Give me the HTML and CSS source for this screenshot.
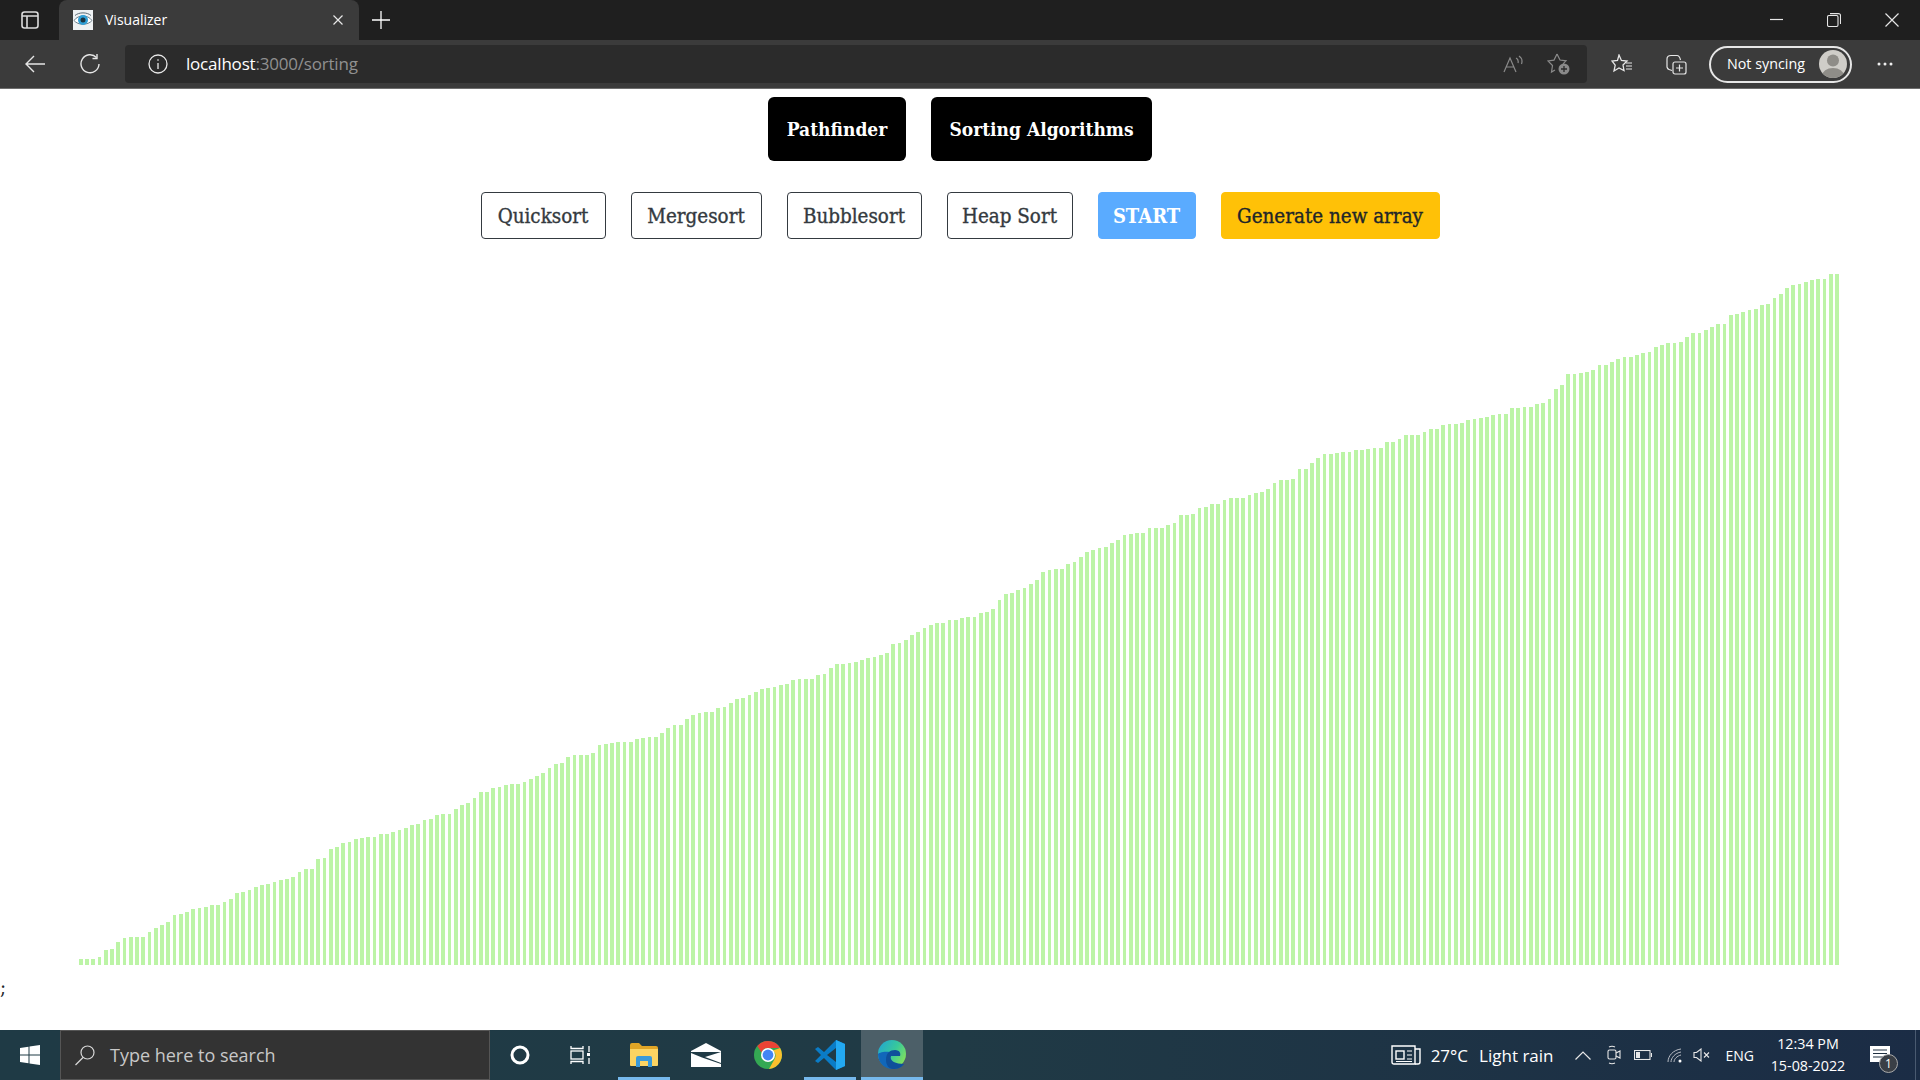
FILE: index.html
```html
<!DOCTYPE html>
<html lang="en">
<head>
  <meta charset="UTF-8" />
  <title>Visualizer</title>
  <link rel="stylesheet" href="styles.css">
</head>
<body>

  <!-- Browser tabs -->
  <div class="tabbar">
    <svg class="ico sidebar-ico" width="18" height="18" viewBox="0 0 18 18" fill="none" stroke="#dcdcdc" stroke-width="1.600"><rect x="1" y="1" width="16" height="16" rx="2.500"/><path d="M1 5h16M6 5v12"/></svg>
    <div class="tab">
      <svg class="favicon" width="20" height="20" viewBox="0 0 20 20"><rect width="20" height="20" fill="#eef1f3"/><path d="M1 10.500C5 4.500 15 4.500 19 10.500C15 15.500 5 15.500 1 10.500Z" fill="#fff" stroke="#6b7f8a" stroke-width="1"/><circle cx="10" cy="10" r="5" fill="#2f9fd6"/><circle cx="10" cy="10" r="2.500" fill="#1c3440"/><path d="M2 5.500C6 2 14 2 18 5.500" fill="none" stroke="#5b6b75"/></svg>
      <span class="tab-title">Visualizer</span>
      <svg class="tab-close" width="10" height="10" viewBox="0 0 10 10" stroke="#e8e8e8" stroke-width="1.200"><path d="M0.500 0.500l9 9M9.500 0.500l-9 9"/></svg>
    </div>
    <svg class="new-tab" width="18" height="18" viewBox="0 0 18 18" stroke="#fff" stroke-width="1.300"><path d="M9 0v18M0 9h18"/></svg>
    <div class="window-btns">
      <svg width="13" height="14" viewBox="0 0 13 14" stroke="#e6e6e6" stroke-width="1.200"><path d="M0 6.500h13"/></svg>
      <svg width="14" height="14" viewBox="0 0 14 14" fill="none" stroke="#e6e6e6" stroke-width="1.100"><rect x="0.500" y="2.500" width="10.500" height="11" rx="1.500"/><path d="M3 0.600h8.500a2 2 0 0 1 2 2V11"/></svg>
      <svg width="14" height="14" viewBox="0 0 14 14" stroke="#e6e6e6" stroke-width="1.200"><path d="M0.500 0.500l13 13M13.500 0.500l-13 13"/></svg>
    </div>
  </div>

  <!-- Address bar -->
  <div class="toolbar">
    <svg class="back-ico" width="20" height="18" viewBox="0 0 20 18" fill="none" stroke="#e6e6e6" stroke-width="1.400"><path d="M20 9H1M9 1L1 9l8 8"/></svg>
    <svg class="reload-ico" width="20" height="20" viewBox="0 0 20 20" fill="none" stroke="#e6e6e6" stroke-width="1.400"><path d="M16.500 3.500A9 9 0 1 0 19 10"/><path d="M17 0v4.500h-4.500"/></svg>
    <div class="address">
      <svg class="info-ico" width="20" height="20" viewBox="0 0 20 20" fill="none" stroke="#e8e8e8" stroke-width="1.300"><circle cx="10" cy="10" r="9"/><path d="M10 9v6M10 5.200v1.600"/></svg>
      <span class="url">localhost<span class="url-rest">:3000/sorting</span></span>
      <svg class="read-ico" width="20" height="18" viewBox="0 0 20 18" fill="none" stroke="#8a8a8a" stroke-width="1.200"><path d="M1 17L7 3l6 14M3 12h8M13 3c2 1 2.500 3 2 5M16 1c3 2 3.500 5 2.500 8"/></svg>
      <svg class="fav-add-ico" width="24" height="22" viewBox="0 0 24 22" fill="none" stroke="#8a8a8a" stroke-width="1.200"><path d="M10 1l3 6 6 .8-3 3M8 17l-3.500 2 1-6.500L1 8l6-.9L10 1"/><circle cx="17" cy="16" r="5.500" fill="#8a8a8a" stroke="none"/><path d="M17 13v6M14 16h6" stroke="#2b2b2b" stroke-width="1.300"/></svg>
    </div>
    <svg class="fav-ico" width="22" height="20" viewBox="0 0 22 20" fill="none" stroke="#e6e6e6" stroke-width="1.300"><path d="M8 1l2.400 5.500 5.600.5-4 4 1 5.500L8 14l-5 3 1.200-5.800L1 7l5.500-.5L8 1Z"/><path d="M15 9h6M15 12h6M15 15h6" stroke-width="1.100"/></svg>
    <svg class="coll-ico" width="21" height="21" viewBox="0 0 21 21" fill="none" stroke="#e6e6e6" stroke-width="1.200"><path d="M6 16.500L3 15.500Q1.500 15 1 13L1 5Q1 1.500 5 1.500L11 1.500Q13.500 1.500 14.500 6"/><rect x="7" y="8" width="13" height="12" rx="2"/><path d="M13.500 10.500v7M10 14h7"/></svg>
    <div class="sync-pill">
      <span>Not syncing</span>
      <svg class="avatar" width="28" height="28" viewBox="0 0 28 28"><defs><clipPath id="av"><circle cx="14" cy="14" r="14"/></clipPath></defs><circle cx="14" cy="14" r="14" fill="#cfcdc8"/><g clip-path="url(#av)" fill="#8f8d88"><circle cx="14" cy="10.500" r="6"/><ellipse cx="14" cy="26" rx="11" ry="8"/></g></svg>
    </div>
    <svg class="more-ico" width="16" height="4" viewBox="0 0 16 4" fill="#eee"><circle cx="2" cy="2" r="1.500"/><circle cx="8" cy="2" r="1.500"/><circle cx="14" cy="2" r="1.500"/></svg>
  </div>

  <!-- Page -->
  <div class="page">
    <div class="nav-row">
      <button class="nav-btn pathfinder">Pathfinder</button>
      <button class="nav-btn sorting">Sorting Algorithms</button>
    </div>
    <div class="algo-row">
      <button class="algo-btn quick">Quicksort</button>
      <button class="algo-btn merge">Mergesort</button>
      <button class="algo-btn bubble">Bubblesort</button>
      <button class="algo-btn heap">Heap Sort</button>
      <button class="algo-btn start">START</button>
      <button class="algo-btn generate">Generate new array</button>
    </div>
    <div class="chart" id="chart"></div>
    <div class="stray">;</div>
  </div>

  <!-- Windows taskbar -->
  <div class="taskbar">
    <div class="start-btn">
      <svg width="20" height="20" viewBox="0 0 20 20" fill="#fff"><path d="M0 3l8.500-1.200V9.500H0ZM9.500 1.600L20 0v9.500H9.500ZM0 10.500h8.500v7.700L0 17ZM9.500 10.500H20V20L9.500 18.400Z"/></svg>
    </div>
    <div class="search-box">
      <svg width="20" height="21" viewBox="0 0 20 21" fill="none" stroke="#d8d8d8" stroke-width="1.200"><circle cx="12.500" cy="7.500" r="6.500"/><path d="M8 12.500L0.500 20"/></svg>
      <span>Type here to search</span>
    </div>
    <div class="task-icons">
      <div class="task-item"><svg width="20" height="20" viewBox="0 0 20 20" fill="none" stroke="#fff" stroke-width="3"><circle cx="10" cy="10" r="8"/></svg></div>
      <div class="task-item task-view"><svg width="20" height="20" viewBox="0 0 20 20" fill="none" stroke="#fff" stroke-width="1.300"><path d="M1 1v2.500h12V1M1 19v-2.500h12V19"/><rect x="1" y="6" width="12" height="8"/><path d="M19 1v6M19 13v6"/><rect x="17" y="8" width="3" height="3" fill="#fff" stroke="none"/></svg></div>
      <div class="task-item running"><svg width="28" height="24" viewBox="0 0 28 24"><path d="M0 2q0-2 2-2h7l3 3h14q2 0 2 2v3H0Z" fill="#e0a526"/><path d="M0 6h28v16q0 1-1 1H1q-1 0-1-1Z" fill="#fcd462"/><path d="M6 24v-9q0-2 2-2h12q2 0 2 2v9h-4v-6h-8v6Z" fill="#3a9ad9"/></svg></div>
      <div class="task-item"><svg width="30" height="24" viewBox="0 0 30 24"><path d="M0 8L15 0l15 8v16H0Z" fill="#fff"/><path d="M0 9H30L14 14 30 20V21L11 14.500 0 10Z" fill="#203a45"/></svg></div>
      <div class="task-item"><svg width="28" height="28" viewBox="0 0 28 28"><circle cx="14" cy="14" r="14" fill="#34a853"/><path d="M14 0a14 14 0 0 1 12.100 7H14a7 7 0 0 0-6.500 4.400L3.300 5A14 14 0 0 1 14 0Z" fill="#ea4335"/><path d="M26.100 7A14 14 0 0 1 15 28l5.600-10A7 7 0 0 0 19 9.500Z" fill="#fbc02d"/><circle cx="14" cy="14" r="7" fill="#fff"/><circle cx="14" cy="14" r="5.400" fill="#4285f4"/></svg></div>
      <div class="task-item running"><svg width="30" height="30" viewBox="0 0 30 30"><path d="M21 0l9 4v22l-9 4L9 18l-6 5-3-2 6-6-6-6 3-2 6 5Z" fill="#0a7cc7"/><path d="M21 0l9 4v22l-9 4Z" fill="#23a9f2"/><path d="M21 8v14l-9-7Z" fill="#203a45"/></svg></div>
      <div class="task-item active"><svg width="30" height="30" viewBox="0 0 30 30"><defs><linearGradient id="edgeA" x1="0" y1="0" x2="1" y2="0.600"><stop offset="0" stop-color="#1fa3d8"/><stop offset="0.600" stop-color="#38c99a"/><stop offset="1" stop-color="#7ee060"/></linearGradient></defs><circle cx="15" cy="14" r="14" fill="url(#edgeA)"/><path d="M1 14c0 9 7 15 15 15 5 0 9-2 11-5-6 3-14 1-14-6 0-3 1.500-4 3-5-7-3-15 0-15 1Z" fill="#1167ba"/><path d="M9 20c0-7 4-10 9-10s6 4 5 6l-9 0c-2 5 5 8 13 8-3 4-7 5-11 5-4 0-7-4-7-9Z" fill="#0f4f9b"/></svg></div>
    </div>
    <div class="tray">
      <svg class="news-ico" width="30" height="20" viewBox="0 0 30 20" fill="none" stroke="#fff" stroke-width="1.400"><path d="M1 1h23v18H3q-2 0-2-2Z"/><path d="M24 4h5v13q0 2-2 2h-3"/><rect x="5" y="6" width="8" height="8"/><path d="M16 6h5M16 10h5M16 14h5M5 16.500h16" stroke-width="1.200"/></svg>
      <span class="tray-temp">27°C</span>
      <span class="tray-rain">Light rain</span>
      <svg class="caret" width="16" height="9" viewBox="0 0 16 9" fill="none" stroke="#e8e8e8" stroke-width="1.200"><path d="M0.500 8.500L8 1l7.500 7.500"/></svg>
      <svg class="meet" width="14" height="20" viewBox="0 0 14 20" fill="none" stroke="#e8e8e8" stroke-width="1.100"><rect x="1" y="5" width="8" height="9" rx="1.500"/><path d="M9 8l4-2v7l-4-2M2 2q3-1.500 6 0M2 18q3 1.500 6 0"/></svg>
      <svg class="battery" width="18" height="10" viewBox="0 0 18 10" fill="none" stroke="#e8e8e8" stroke-width="1.100"><rect x="0.500" y="0.500" width="15.500" height="9"/><rect x="2" y="2" width="4" height="6" fill="#e8e8e8" stroke="none"/><path d="M17.500 3v4"/></svg>
      <svg class="wifi" width="15" height="15" viewBox="0 0 15 15" fill="none" stroke="#b8bcc4" stroke-width="1"><path d="M1 14C1 8 6 2 14 1M4 14C4 10 8 5 14 4M7 14C7 11 10 8 14 7"/><circle cx="13" cy="13" r="1.500" fill="#fff" stroke="none"/></svg>
      <svg class="volume" width="18" height="14" viewBox="0 0 18 14" fill="none" stroke="#e8e8e8" stroke-width="1.100"><path d="M1 4.500h2.500L8 1v12L3.500 9.500H1Z"/><path d="M11 4.500l5 5M16 4.500l-5 5"/></svg>
      <span class="tray-lang">ENG</span>
      <div class="clock"><span>12:34 PM</span><span>15-08-2022</span></div>
      <div class="notif">
        <svg width="20" height="18" viewBox="0 0 20 18"><path d="M0 0h20v16H0Z" fill="#fff"/><path d="M3 4h14M3 7.500h14M3 11h14" stroke="#203040" stroke-width="1.200"/></svg>
        <span class="notif-badge">1</span>
      </div>
    </div>
    <div class="show-desktop"></div>
  </div>

  <script src="script.js"></script>
</body>
</html>
```

FILE: styles.css
```css
* { margin: 0; padding: 0; box-sizing: border-box; }
html, body {
  width: 100%;
  height: 100%;
  background: #fff;
  font-family: "Open Sans", sans-serif;
  overflow: hidden;
}
body { display: flex; flex-direction: column; }
svg { display: block; flex-shrink: 0; }

/* Tabs */
.tabbar {
  height: 40px;
  background: #1f1f1f;
  display: flex;
  align-items: center;
  color: #fff;
}
.sidebar-ico { margin-left: 21px; margin-right: 20px; }
.tab {
  width: 300px;
  height: 40px;
  background: #3b3b3b;
  border-radius: 8px 8px 0 0;
  display: flex;
  align-items: center;
  padding-left: 14px;
}
.favicon { margin-right: 12px; }
.tab-title { font-size: 14px; flex: 1; padding-bottom: 2px; }
.tab-close { margin-right: 16px; }
.new-tab { margin-left: 13px; }
.window-btns {
  margin-left: auto;
  display: flex;
  align-items: center;
  gap: 44px;
  padding-right: 21px;
}

/* Address bar */
.toolbar {
  height: 49px;
  background: #3b3b3b;
  border-bottom: 1px solid #6e6e6e;
  display: flex;
  align-items: center;
  color: #fff;
}
.back-ico { margin-left: 25px; }
.reload-ico { margin-left: 35px; }
.address {
  width: 1462px;
  height: 38px;
  margin-left: 25px;
  background: #2b2b2b;
  border-radius: 4px;
  display: flex;
  align-items: center;
  padding-left: 23px;
}
.info-ico { margin-right: 18px; }
.url { font-size: 17px; letter-spacing: -0.2px; flex: 1; padding-bottom: 2px; }
.url-rest { color: #909090; }
.read-ico { margin-right: 24px; }
.fav-add-ico { margin-right: 16px; }
.fav-ico { margin-left: 24px; }
.coll-ico { margin-left: 33px; }
.sync-pill {
  width: 143px;
  height: 37px;
  margin-left: 22px;
  border: 2px solid #e6e6e6;
  border-radius: 19px;
  display: flex;
  align-items: center;
  justify-content: space-between;
  padding: 0 3px 0 16px;
  font-size: 14.3px;
}
.sync-pill span { padding-bottom: 2px; }
.more-ico { margin-left: 25px; }

/* Page */
.page {
  flex: 1;
  font-family: "DejaVu Serif", serif;
  font-stretch: condensed;
}
.nav-row {
  display: flex;
  justify-content: center;
  gap: 25px;
  padding-top: 8px;
}
.nav-btn {
  height: 64px;
  background: #000;
  color: #fff;
  border: none;
  border-radius: 6px;
  font-family: inherit;
  font-stretch: inherit;
  font-weight: bold;
  font-size: 19px;
}
.pathfinder { width: 138px; }
.sorting { width: 221px; }
.algo-row {
  display: flex;
  justify-content: center;
  gap: 25px;
  margin-top: 31px;
}
.algo-btn {
  height: 47px;
  background: #fff;
  color: #343a40;
  border: 1px solid #343a40;
  border-radius: 4px;
  font-family: inherit;
  font-stretch: inherit;
  font-size: 20.4px;
  -webkit-text-stroke: 0.35px currentColor;
}
.quick { width: 125px; }
.merge { width: 131px; }
.bubble { width: 135px; }
.heap { width: 126px; }
.start {
  width: 98px;
  background: #5aabff;
  border-color: #5aabff;
  color: #fff;
  font-weight: bold;
  font-size: 20px;
  -webkit-text-stroke: 0;
}
.generate {
  width: 219px;
  background: #ffc107;
  border-color: #ffc107;
  color: #212529;
}
.chart {
  display: flex;
  align-items: flex-end;
  gap: 2.5px;
  height: 691px;
  margin-top: 35px;
  padding-left: 78.9px;
}
.bar { width: 3.75px; flex-shrink: 0; background: #bcf4a6; }
.stray { margin-top: 8px; font-size: 20px; line-height: 28px; color: #212529; }

/* Taskbar */
.taskbar {
  height: 50px;
  background: linear-gradient(90deg, #1f3a45 0%, #203a45 50%, #1b2c45 100%);
  display: flex;
  align-items: stretch;
  color: #fff;
}
.start-btn {
  width: 60px;
  display: flex;
  align-items: center;
  padding-left: 20px;
}
.search-box {
  width: 430px;
  background: #333;
  border: 1px solid #555;
  display: flex;
  align-items: center;
  gap: 15px;
  padding-left: 14px;
  font-size: 18px;
  color: #c8c8c8;
}
.task-icons { display: flex; margin-left: -1px; }
.task-item {
  position: relative;
  width: 62px;
  display: flex;
  align-items: center;
  justify-content: center;
}
.task-view { padding-right: 4px; }
.task-item.running::after,
.task-item.active::after {
  content: "";
  position: absolute;
  left: 5px;
  right: 5px;
  bottom: 0;
  height: 3px;
  background: #76b9ed;
}
.task-item.active { background: #4c5f68; }
.task-item.active::after { left: 0; right: 0; }
.tray {
  margin-left: auto;
  display: flex;
  align-items: center;
  padding-right: 25px;
  font-size: 17px;
}
.news-ico { margin-right: 10px; }
.tray-temp { margin-right: 11px; }
.tray-rain { margin-right: 21px; }
.caret { margin-right: 16px; }
.meet { margin-right: 13px; }
.battery { margin-right: 15px; }
.wifi { margin-right: 11px; }
.volume { margin-right: 15px; }
.tray-lang { font-size: 14px; margin-right: 14px; }
.clock {
  width: 80px;
  display: flex;
  flex-direction: column;
  align-items: center;
  gap: 4px;
  font-size: 14.3px;
  line-height: 18px;
  margin-right: 22px;
}
.notif { position: relative; }
.notif-badge {
  position: absolute;
  left: 9px;
  top: 8px;
  width: 19px;
  height: 19px;
  border-radius: 50%;
  background: #3a3f46;
  border: 1px solid #aaa;
  font-size: 12px;
  line-height: 17px;
  text-align: center;
}
.show-desktop { width: 5px; border-left: 1px solid #4a5a70; }
```

FILE: script.js
```js
// bar heights in px, already sorted
const heights = [
  6,6,6,8,15,16,23,27,28,28,28,33,37,40,43,50,51,53,56,57,58,60,60,63,66,72,73,75,78,80,81,83,85,86,88,93,96,96,106,107,
  116,118,122,123,126,127,128,128,131,131,133,135,137,140,141,145,146,150,151,151,156,160,162,167,173,173,177,178,180,181,181,
  183,186,189,192,197,
  201,202,208,210,210,210,212,220,221,222,223,223,223,226,227,228,228,232,237,240,240,246,250,252,253,253,257,258,262,266,267,
  270,273,276,277,278,280,281,285,286,286,286,290,291,297,301,301,302,303,305,307,308,310,312,321,322,325,330,333,337,340,342,342,345,345,347,348,
  348,352,353,356,365,371,372,375,377,381,385,393,395,396,396,401,403,408,413,415,417,418,422,425,430,431,432,432,437,437,437,440,442,450,450,451,
  457,458,461,461,465,467,467,467,470,472,473,476,482,485,485,486,496,496,502,507,511,511,512,513,513,515,515,516,517,517,523,523,526,530,530,530,
  533,536,536,540,541,541,542,545,546,547,548,550,551,551,557,557,558,558,561,562,566,576,580,591,591,592,593,595,600,600,603,606,608,608,610,612,613,
  618,620,622,622,623,628,632,632,635,638,641,641,650,651,653,655,656,660,661,667,671,677,680,681,683,685,686,686,691,691
];

const chart = document.getElementById('chart');
heights.forEach(h => {
  const bar = document.createElement('div');
  bar.className = 'bar';
  bar.style.height = h + 'px';
  chart.appendChild(bar);
});
```
